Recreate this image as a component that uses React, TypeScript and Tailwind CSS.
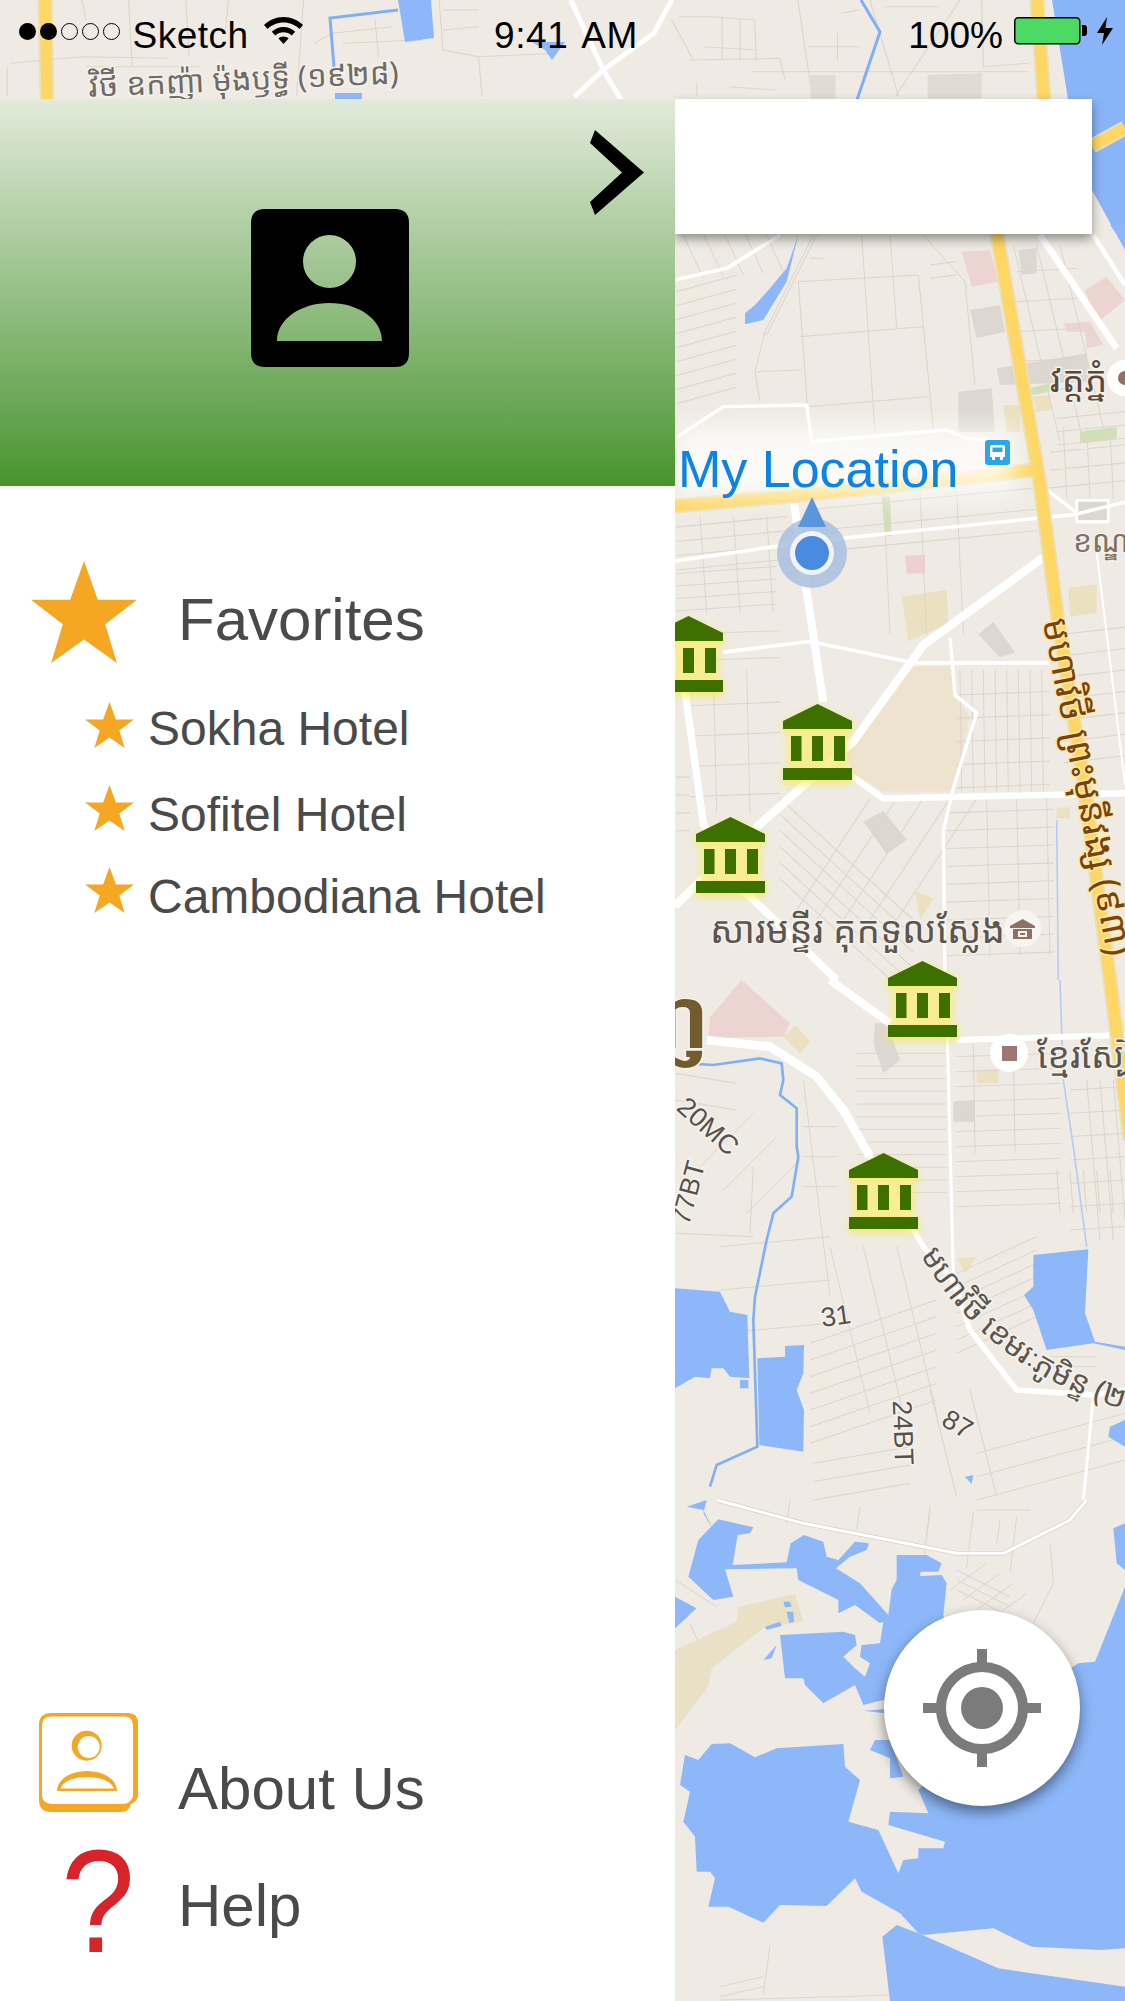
import type { ReactNode } from 'react';

const FONT = "font-['Liberation_Sans',Arial,sans-serif]";
const KHMER = "'Noto Sans Khmer','Noto Sans','DejaVu Sans',sans-serif";

// parallel street lines, returns one path string
function hatch(x1: number, y1: number, x2: number, y2: number, dx: number, dy: number, n: number) {
  let d = '';
  for (let i = 0; i < n; i++) {
    d += `M${x1 + i * dx} ${y1 + i * dy}L${x2 + i * dx} ${y2 + i * dy}`;
  }
  return d;
}

function Crop({ x, y, sx = 3, sy = 3, children }: { x: number; y: number; sx?: number; sy?: number; children: ReactNode }) {
  return <g transform={`translate(${x} ${y}) scale(${1 / sx} ${1 / sy})`}>{children}</g>;
}

const MINOR_A = [
  hatch(20, 300, 350, 270, 0, 40, 4),
  hatch(20, 430, 320, 410, 0, 35, 4),
  hatch(90, 270, 110, 540, 100, 0, 3),
  hatch(870, 700, 875, 1040, 35, 0, 8),
  hatch(860, 770, 1140, 760, 0, 65, 5),
  hatch(330, 1060, 730, 1400, 0, 45, 6),
  hatch(360, 1400, 600, 1060, 80, 0, 5),
  hatch(830, 1100, 1150, 1090, 0, 50, 9),
  hatch(950, 1060, 960, 1500, 90, 0, 3),
  hatch(1180, 600, 1365, 580, 0, 60, 7),
  hatch(430, 250, 1100, 190, 0, 60, 3),
  hatch(640, 200, 660, 600, 110, 0, 3),
  hatch(20, 600, 330, 590, 0, 75, 2),
  hatch(60, 800, 330, 790, 0, 85, 4),
  hatch(130, 700, 140, 1100, 100, 0, 2),
  hatch(20, 1000, 60, 1000, 0, 50, 4),
  hatch(1140, 90, 1365, 70, 0, 50, 3),
  hatch(1180, 20, 1190, 220, 70, 0, 3),
].join('');

const MINOR_B = [
  hatch(560, 220, 830, 220, 0, 38, 12),
  hatch(860, 230, 1170, 220, 0, 45, 11),
  hatch(910, 190, 915, 520, 120, 0, 2),
  hatch(1160, 570, 1170, 700, 40, 0, 5),
  hatch(1200, 330, 1365, 320, 0, 70, 7),
  hatch(1250, 300, 1290, 780, 40, 0, 3),
  hatch(420, 1090, 800, 960, 0, 50, 7),
  hatch(860, 880, 1100, 770, 0, 40, 7),
  hatch(480, 800, 600, 1300, 100, 0, 3),
  hatch(150, 800, 480, 770, 0, 130, 3),
  hatch(20, 760, 250, 770, 0, 0, 1),
  hatch(15, 280, 200, 310, 0, 80, 2),
  hatch(400, 440, 500, 440, 0, 90, 3),
  hatch(400, 300, 480, 950, 0, 0, 1),
  hatch(250, 560, 240, 760, 0, 0, 1),
  hatch(90, 560, 250, 400, 70, 70, 3),
  hatch(430, 1450, 720, 1400, 0, 55, 3),
  hatch(920, 1420, 1365, 1300, 0, 70, 3),
  hatch(780, 1230, 860, 1550, 120, 0, 2),
  hatch(1140, 1130, 1280, 1130, 0, 30, 2),
].join('');

const MINOR_C = [
  hatch(360, 0, 350, 70, 210, 20, 4),
  hatch(780, 20, 760, 190, 130, 15, 3),
  hatch(860, 210, 1020, 290, 0, 30, 3),
  hatch(840, 270, 950, 190, 40, 30, 4),
  hatch(1140, 130, 1150, 250, 0, 0, 1),
  hatch(1150, 250, 1090, 370, 0, 0, 1),
  hatch(920, 30, 1080, 30, 0, 0, 1),
  hatch(15, 240, 140, 320, 0, 0, 1),
  hatch(60, 370, 110, 480, 0, 0, 1),
  hatch(150, 1500, 850, 1480, 0, 0, 1),
  hatch(300, 1340, 280, 1480, 0, 0, 1),
  hatch(150, 1460, 280, 1430, 0, 30, 2),
].join('');

const MINOR_D = [
  hatch(385, 170, 745, 150, 0, 0, 1),
  hatch(745, 150, 790, 610, 0, 0, 1),
  hatch(385, 170, 420, 650, 0, 0, 1),
  hatch(575, 30, 615, 620, 0, 0, 1),
  hatch(390, 335, 760, 305, 0, 0, 1),
  hatch(420, 545, 775, 515, 0, 0, 1),
  hatch(260, 440, 395, 435, 0, 0, 1),
  hatch(660, 30, 680, 310, 0, 0, 1),
  hatch(20, 200, 200, 150, 0, 42, 9),
  hatch(40, 30, 100, 160, 60, -5, 5),
  hatch(430, 30, 280, 330, 10, 0, 2),
  hatch(285, 320, 255, 440, 0, 0, 1),
  hatch(255, 440, 270, 530, 0, 0, 1),
  hatch(420, 100, 460, 100, 0, 0, 1),
  hatch(760, 30, 885, 170, 0, 0, 1),
  hatch(885, 170, 915, 480, 0, 0, 1),
  hatch(780, 120, 860, 110, 0, 40, 2),
  hatch(1030, 60, 1170, 650, 70, 0, 3),
  hatch(1040, 140, 1220, 130, 0, 90, 5),
  hatch(1160, 580, 1365, 560, 0, 40, 3),
].join('');

const TOP_LEFT = 'M230 0L240 60M360 0L370 200M520 0L530 170M640 0L630 100M30 190L230 170L470 175M240 200L560 200M880 130L930 100L1100 80M960 130L1180 120M1050 60L1060 170M1240 30L1340 30M1240 90L1340 80M1230 0L1240 150L1340 170L1350 290M850 0L830 290M20 200L20 290M1340 170L1560 160';
const TOP_RIGHT = 'M330 50L420 50L540 60M450 50L450 180M500 60L500 180M540 60L545 185M400 140L540 150M360 180L610 175L625 240M660 0L700 290M690 140L830 140M770 100L770 180M530 215L1300 215M1110 0L930 290M1170 0L1175 200L1300 190M470 260L600 270M310 60L370 180M860 0L940 290M900 20L1050 20M780 40L830 30M380 250L380 290';

const LABEL = '[paint-order:stroke]';

function MapBase() {
  return (
    <svg className="absolute inset-0" width={1125} height={2001} viewBox="0 0 1125 2001" fill="none">
      <rect width={1125} height={2001} fill="#efebe4" />

      {/* top right river */}
      <path d="M1052 0H1125V250L1092 190L1068 99Z" fill="#8ab4f8" />

      {/* land use patches */}
      <Crop x={670} y={225}>
        <path d="M875 80L960 75L985 170L905 185ZM1245 195L1310 155L1365 225L1280 295ZM1180 295L1260 290L1300 360L1250 370L1245 320L1190 320Z" fill="#ecd5d1" />
        <path d="M900 255L990 240L1005 320L920 340ZM980 430L1250 385L1260 470L990 480ZM865 500L965 490L975 620L865 620ZM1045 75L1100 70L1100 145L1055 150Z" fill="#dcd8d1" />
        <path d="M1230 620L1340 605L1340 640L1230 655ZM1080 490L1140 475L1140 500L1085 510Z" fill="#cfe0b4" />
        <path d="M1090 515L1140 510L1145 555L1100 560ZM1000 540L1050 540L1050 620L1010 620Z" fill="#ebe0bf" />
      </Crop>
      <Crop x={670} y={420} sy={2.8}>
        <path d="M530 940L730 690L850 690L850 770L900 830L850 1040L640 1040L550 990Z" fill="#eee3cf" />
        <path d="M695 495L830 475L835 570L715 620ZM1195 470L1280 460L1280 540L1200 550ZM1160 1085L1200 1085L1200 1115L1160 1115ZM735 1320L790 1340L750 1400Z" fill="#ebe0bf" />
        <path d="M705 380L765 378L765 430L710 430Z" fill="#efcfd0" />
        <path d="M635 215L660 215L665 325L645 325Z" fill="#cfe0b4" />
        <path d="M1225 225L1310 225L1310 280L1225 280ZM580 1125L640 1095L710 1175L650 1215ZM925 600L970 565L1035 650L990 665Z" fill="#dcd8d1" />
      </Crop>
      <Crop x={670} y={980}>
        <path d="M120 110L215 0L360 130L340 170L115 175Z" fill="#ecd5d1" />
        <path d="M340 170L375 135L420 185L390 220ZM920 270L985 265L985 310L920 310ZM860 835L920 830L885 880Z" fill="#ebe0bf" />
        <path d="M615 130L650 130L690 240L640 280L610 190ZM850 365L915 360L915 425L850 425Z" fill="#dcd8d1" />
      </Crop>

      {/* minor streets */}
      <g stroke="#dad6cc" fill="none">
        <Crop x={670} y={420} sy={2.8}><path d={MINOR_A} strokeWidth={3} /></Crop>
        <Crop x={670} y={980}><path d={MINOR_B} strokeWidth={3} /></Crop>
        <Crop x={670} y={1500}><path d={MINOR_C} strokeWidth={3} /></Crop>
        <Crop x={670} y={225}><path d={MINOR_D} strokeWidth={3} /></Crop>
        <Crop x={0} y={0} sx={2.8}><path d={TOP_LEFT} strokeWidth={3} /></Crop>
        <Crop x={560} y={0} sx={2.775}>
          <path d={TOP_RIGHT} strokeWidth={3} />
          <path d="M695 225H765V295H695ZM1020 225L1170 220V295H1020Z" fill="#e0dcd4" stroke="none" />
        </Crop>
      </g>

      {/* water */}
      <g fill="#8db7f9">
        <path d="M398 0H431L434 38L405 42ZM532 42H565L552 60L545 50ZM335 93H362V99H335Z" />
        <Crop x={670} y={225}>
          <path d="M225 265L255 240L300 190L350 130L385 30L350 170L280 285L225 298ZM1320 0H1365V60Z" />
        </Crop>
        <Crop x={670} y={980}>
          <path d="M15 925L150 935L180 995L232 1005L238 1195L180 1190L160 1165L125 1165L120 1195L75 1190L15 1225Z" />
          <path d="M262 1135L345 1130L345 1098L402 1095L400 1180L380 1230L402 1290L400 1415L268 1395Z" />
          <path d="M1090 825L1255 808L1245 1000L1275 1085L1365 1100V1110L1270 1090L1130 1110L1090 990L1062 945L1090 920Z" />
          <path d="M1365 1320L1320 1340L1315 1370L1365 1400ZM885 1490L910 1485L905 1512ZM210 1200H235V1225H210Z" />
        </Crop>
        <Crop x={670} y={1500}>
          <path d="M145 58L250 82L240 100L203 105L188 195L350 187L362 130L402 105L460 125L470 170L505 180L555 125L597 130L590 150L540 170L498 205L570 250L655 345L665 268L680 240L680 165L770 165L815 190L805 215L752 215L750 228L815 225L830 250L820 345L900 700L1225 490L1275 485L1365 260V1345L1290 1350L1085 1340L970 1285L760 1305L745 1300L690 1240L575 1175L555 1135L470 1218L330 1215L280 1268L175 1220L115 1220L135 1135L120 1115L80 1115L75 1010L40 965L60 875L30 855L45 765L85 780L125 732L180 730L255 772L320 745L520 732L525 800L570 840L535 965L625 990L685 1120L700 1080L745 1075L745 1045L820 1045L825 1025L655 975L660 935L775 940L745 870L900 700L640 600L580 615L555 555L460 610L405 555L400 535L345 535L330 405L520 395L555 405L560 435L520 470L555 505L585 530L600 490L570 470L575 435L630 430L640 365L630 370L555 315L505 340L505 300L385 240L380 205L165 208L190 290L130 300L55 230L85 120Z" />
          <path d="M1330 85L1365 70V210L1340 190ZM15 290L80 325L15 385ZM600 750L615 720L660 720L700 830L660 835L660 775ZM637 1310L680 1275L745 1300L985 1405L1365 1460V1503H660ZM50 20L110 0L100 40L130 90L100 30Z" />
          <path d="M580 632L645 628V640Z" />
          <path d="M15 450L200 365L205 320L375 282L400 365L280 385L125 505L115 560L15 690Z" fill="#e9e0c5" />
          <path d="M285 380L330 365L335 378L290 390ZM340 305H360L365 320L345 322ZM350 335H370L372 365L358 368Z" />
          <path d="M280 480L320 435L305 475Z" />
        </Crop>
      </g>

      {/* streams */}
      <g stroke="#7fb0f5" fill="none">
        <path d="M861 0L880 32L857 100" strokeWidth={3} />
        <path d="M398 10L330 18L334 67" strokeWidth={3} />
        <Crop x={670} y={980}>
          <path d="M50 250L130 255L270 235L335 250L340 300L330 345L380 385L380 500L385 530L365 650L310 700L290 780L255 950L250 1020L262 1400L140 1455L120 1520" strokeWidth={8} />
          <path d="M1170 0L1180 300L1210 500L1250 800" strokeWidth={5} stroke="#b5cdf2" />
        </Crop>
        <Crop x={670} y={420} sy={2.8}>
          <path d="M1160 1120L1165 1568" strokeWidth={5} stroke="#b5cdf2" />
        </Crop>
      </g>

      {/* white roads */}
      <g stroke="#ffffff" fill="none" strokeLinejoin="round">
        <Crop x={670} y={225}>
          <path d="M15 165L170 130L330 30" strokeWidth={11} />
          <path d="M1110 30L1340 370" strokeWidth={20} />
          <path d="M1270 30L1365 180" strokeWidth={14} />
          <path d="M15 640L160 545L410 540L425 650L830 615L890 640L1000 650" strokeWidth={10} />
        </Crop>
        <Crop x={670} y={420} sy={2.8}>
          <path d="M370 220L410 480L460 790" strokeWidth={24} />
          <path d="M15 1360L260 1140L550 900L760 630L1120 385" strokeWidth={24} />
          <path d="M550 1000L640 1060L1365 1045" strokeWidth={18} />
          <path d="M45 760L100 1130L180 1280L500 1568" strokeWidth={22} />
          <path d="M15 395L420 340L1210 265L1365 230" strokeWidth={10} />
          <path d="M1110 180L1220 260" strokeWidth={10} />
          <path d="M160 650L420 620L730 680L1140 680" strokeWidth={10} />
          <path d="M840 610L855 770L920 820L850 1030L820 1150L825 1568" strokeWidth={10} />
          <path d="M1280 370L1365 1020" strokeWidth={6} />
          <path d="M1220 225H1315V285H1220Z" strokeWidth={8} />
        </Crop>
        <Crop x={670} y={980}>
          <path d="M480 0L660 130" strokeWidth={24} />
          <path d="M110 180L300 200L440 290L520 390L600 530" strokeWidth={26} />
          <path d="M600 530L760 800L850 900L900 1050L1040 1230L1270 1245L1365 1230" strokeWidth={16} />
          <path d="M832 170L850 890" strokeWidth={9} />
          <path d="M860 180L1365 165" strokeWidth={18} />
          <path d="M1270 1250L1240 1560" strokeWidth={8} />
        </Crop>
        <Crop x={670} y={1500}>
          <path d="M140 0L400 70L860 160L1000 160L1200 60L1250 0" strokeWidth={14} stroke="#d9d4ca" />
          <path d="M140 0L400 70L860 160L1000 160L1200 60L1250 0" strokeWidth={9} />
        </Crop>
        <Crop x={560} y={0} sx={2.775}>
          <path d="M30 0L120 210L170 300" strokeWidth={14} />
          <path d="M310 0L260 100L120 210L40 290" strokeWidth={14} />
        </Crop>
      </g>

      {/* yellow roads */}
      <g fill="none" strokeLinejoin="round">
        <g stroke="#ecdfb4" strokeWidth={15}>
          <path d="M45 0L47 99M1037 0L1044 99M1092 146L1125 128" />
          <path d="M997 234L1040 484L1057 613L1083 777L1110 980L1130 1140" />
          <path d="M675 506L803 495L960 479L1033 470" />
        </g>
        <g stroke="#fdd663" strokeWidth={11}>
          <path d="M45 0L47 99M1037 0L1044 99M1092 146L1125 128" />
          <path d="M997 234L1040 484L1057 613L1083 777L1110 980L1130 1140" />
          <path d="M675 506L803 495L960 479L1033 470" />
        </g>
      </g>

      {/* place labels */}
      <g fontFamily={KHMER}>
        <text x={89} y={97} fontSize={31} fill="#6f6b66" stroke="#f5f2ec" strokeWidth={3} className={LABEL} transform="rotate(-2.500 89 97)">វិថី ឧកញ៉ា ម៉ុងឫទ្ធី (១៩២៨)</text>
        <text x={1050} y={392} fontSize={36} fill="#5b4a3c" stroke="#f5f2ec" strokeWidth={3} className={LABEL}>វត្តភ្នំ</text>
        <text x={1073} y={552} fontSize={30} fill="#7e7263" stroke="#f5f2ec" strokeWidth={3} className={LABEL}>ខណ្ឌ</text>
        <text x={710} y={943} fontSize={37} fill="#5c5650" stroke="#f5f2ec" strokeWidth={3} className={LABEL}>សារមន្ទីរ គុកទួលស្លែង</text>
        <text x={1037} y={1068} fontSize={36} fill="#5c5650" stroke="#f5f2ec" strokeWidth={3} className={LABEL}>ខ្មែរស្ប៊ែរ</text>
        <text x={710} y={1048} fontSize={84} fontWeight={700} textAnchor="end" fill="#725c2e" stroke="#f5f2ec" strokeWidth={3} className={LABEL}>ភ្នំពេញ</text>
        <text transform="translate(1075 789) rotate(79)" fontSize={37} textAnchor="middle" fill="#79430f" stroke="#fde9a8" strokeWidth={3} className={LABEL}>មហាវិថី ព្រះមុនីវង្ស (៩៣)</text>
        <path id="khemarak" d="M920 1255Q975 1345 1060 1385T1140 1400" />
        <text fontSize={31} fill="#5c5650" stroke="#f5f2ec" strokeWidth={3} className={LABEL}>
          <textPath href="#khemarak">មហាវិថី ខេមរៈភូមិន្ទ (២</textPath>
        </text>
      </g>
      <g fontFamily="'Liberation Sans',Arial,sans-serif" fontSize={27} fill="#55524e" stroke="#f5f2ec" strokeWidth={3} className={LABEL} textAnchor="middle">
        <text transform="translate(702 1133) rotate(42)">20MC</text>
        <text transform="translate(697 1195) rotate(-75)">77BT</text>
        <text transform="translate(837 1325) rotate(-8)">31</text>
        <text transform="translate(894 1433) rotate(88)">24BT</text>
        <text transform="translate(953 1432) rotate(30)">87</text>
      </g>
    </svg>
  );
}

function Star({ className }: { className: string }) {
  return (
    <svg className={className} viewBox="0 0 100 100" preserveAspectRatio="none">
      <polygon points="50,0 63,38 100,38 70,62 81,100 50,77 19,100 30,62 0,38 37,38" fill="#f5a623" />
    </svg>
  );
}

// green museum pin with the yellow glow around it
function MuseumPin({ className }: { className: string }) {
  return (
    <svg className={`absolute drop-shadow-[0_3px_4px_#f8ea55] ${className}`} width={69} height={76} viewBox="0 0 69 76">
      <rect x={5} y={24} width={59} height={44} fill="#f8ee9a" opacity={0.55} />
      <path d="M34.5 0L69 17V25H0V17Z" fill="#3e7000" />
      <path d="M8 32H18.500V57H8ZM29 32H40V57H29ZM51 32H62V57H51ZM0 64H69V76H0Z" fill="#3e7000" />
    </svg>
  );
}

function LocationDot() {
  return (
    <svg className="absolute left-[777px] top-[497px]" width={70} height={92} viewBox="0 0 70 92">
      <circle cx={35} cy={56} r={35} fill="#a7c0e0" opacity={0.85} />
      <circle cx={35} cy={56} r={22} fill="#f1f3f5" />
      <circle cx={35} cy={56} r={17} fill="#4a8be2" />
      <path d="M35 0L49 30H21Z" fill="#5a96de" />
    </svg>
  );
}

function MapMarkers() {
  return (
    <>
      <div className="absolute left-[675px] top-[428px] h-[68px] w-[340px] bg-white/75 blur-md" />
      <p className={`absolute left-[678px] top-[443px] text-[52px] leading-none text-[#0a84e6] ${FONT}`}>My Location</p>
      <svg className="absolute left-[985px] top-[440px]" width={25} height={25} viewBox="0 0 25 25">
        <rect width={25} height={25} rx={3} fill="#29a7ea" />
        <path d="M7 5H18Q20 5 20 7V17H5V7Q5 5 7 5ZM7.500 7.500V12H17.500V7.500ZM7 17H10V20H7ZM15 17H18V20H15Z" fill="#fff" fillRule="evenodd" />
      </svg>
      <LocationDot />
      <MuseumPin className="left-[654px] top-[616px]" />
      <MuseumPin className="left-[783px] top-[704px]" />
      <MuseumPin className="left-[696px] top-[817px]" />
      <MuseumPin className="left-[888px] top-[961px]" />
      <MuseumPin className="left-[849px] top-[1153px]" />

      <div className="absolute left-[1004px] top-[910px] flex h-[37px] w-[37px] items-center justify-center rounded-full bg-[#f7f5f1]">
        <svg width={25} height={20} viewBox="0 0 25 20">
          <path d="M12.500 0L25 7V9H0V7ZM3 10H22V20H3ZM8 12V18H17V12Z" fill="#8f6f66" fillRule="evenodd" />
          <path d="M10 14H15V16H10Z" fill="#8f6f66" />
        </svg>
      </div>
      <div className="absolute left-[990px] top-[1034px] flex h-[38px] w-[38px] items-center justify-center rounded-full bg-white">
        <div className="h-[15px] w-[15px] bg-[#9d7872]" />
      </div>
      <div className="absolute left-[1107px] top-[360px] flex h-[36px] w-[36px] items-center justify-center rounded-full bg-white">
        <div className="h-[14px] w-[14px] rounded-full bg-[#8f6f66]" />
      </div>
    </>
  );
}

function StatusBar() {
  return (
    <div className={`relative grid h-[99px] grid-cols-[1fr_auto_1fr] pl-[19px] pr-[12px] pt-[15px] text-[37px] leading-[41px] text-black ${FONT}`}>
      <div className="flex items-start">
        <div className="mt-[8px] flex gap-[4.500px]">
          <span className="h-[16.500px] w-[16.500px] rounded-full bg-black" />
          <span className="h-[16.500px] w-[16.500px] rounded-full bg-black" />
          <span className="h-[16.500px] w-[16.500px] rounded-full border border-black" />
          <span className="h-[16.500px] w-[16.500px] rounded-full border border-black" />
          <span className="h-[16.500px] w-[16.500px] rounded-full border border-black" />
        </div>
        <span className="ml-[13px] tracking-[0.5px]">Sketch</span>
        <svg className="ml-[15px] mt-[2px]" width={39} height={27} viewBox="0 0 39 27">
          <path d="M19.500 0C27 0 34 3 39 8L35.500 12C31.500 8 25.500 5.500 19.500 5.500S7.500 8 3.500 12L0 8C5 3 12 0 19.500 0Z" fill="#000" />
          <path d="M19.500 10C24 10 28 11.700 31.200 14.700L27.700 18.500C25.500 16.500 22.500 15.300 19.500 15.300S13.500 16.500 11.300 18.500L7.800 14.700C11 11.700 15 10 19.500 10Z" fill="#000" />
          <path d="M19.500 19.500C21.500 19.500 23.200 20.200 24.500 21.400L19.500 27L14.500 21.400C15.800 20.200 17.500 19.500 19.500 19.500Z" fill="#000" />
        </svg>
      </div>
      <span className="tracking-[0.6px] [word-spacing:4px]">9:41 AM</span>
      <div className="flex items-start justify-end">
        <span>100%</span>
        <svg className="ml-[11px] mt-[2px]" width={74} height={28} viewBox="0 0 74 28">
          <rect x={0.750} y={0.750} width={65} height={26} rx={3.500} fill="#4cd964" stroke="#000" strokeWidth={1.500} />
          <path d="M68 8H70Q73 8 73 11V16Q73 19 70 19H68Z" fill="#000" />
        </svg>
        <svg className="ml-[9px] mt-[2px]" width={16} height={28} viewBox="0 0 16 28">
          <path d="M10 0L0 16H7L5 28L16 11H8.500Z" fill="#000" />
        </svg>
      </div>
    </div>
  );
}

function ContactIcon() {
  return (
    <svg width={158} height={158} viewBox="0 0 158 158">
      <path
        fillRule="evenodd"
        fill="#000"
        d="M14 0H144Q158 0 158 14V144Q158 158 144 158H14Q0 158 0 144V14Q0 0 14 0ZM78.500 26A26.500 26.500 0 1 0 78.500 79A26.500 26.500 0 1 0 78.500 26ZM26 132H131C131 110 107 94 78.500 94S26 110 26 132Z"
      />
    </svg>
  );
}

function AboutIcon() {
  return (
    <svg width={99} height={99} viewBox="0 0 99 99">
      <path
        fillRule="evenodd"
        fill="#f5a623"
        d="M12 0H89Q99 0 99 10V82Q99 88 92 91V87Q94 85 94 82V12Q94 4 86 3.500H12Q3 3.500 3 12V82Q3 90 12 91H84Q89 91 92 87V91Q90 99 82 99H12Q0 99 0 87V12Q0 0 12 0Z"
      />
      <path
        fillRule="evenodd"
        fill="#f5a623"
        d="M47.700 17.700A15 15 0 1 0 47.700 47.700A15 15 0 1 0 47.700 17.700ZM49.700 23A11 11 0 1 1 49.700 45A11 11 0 1 1 49.700 23ZM18 78H78C78 67 65 58 48 58S18 67 18 78ZM21.500 75.500C24 68 35 64 48 64S72 68 75 75.500Z"
      />
    </svg>
  );
}

const HOTELS = [
  { name: 'Sokha Hotel', rowClass: 'h-[83px]', textClass: 'mt-[3px]' },
  { name: 'Sofitel Hotel', rowClass: 'h-[82px]', textClass: 'mt-[6px]' },
  { name: 'Cambodiana Hotel', rowClass: 'h-[82px]', textClass: 'mt-[6px]' },
];

function Drawer() {
  return (
    <aside className={`flex w-[675px] flex-col bg-white text-[#4a4a4a] ${FONT}`}>
      <div className="relative flex h-[387px] items-center justify-center bg-gradient-to-b from-[#e2eadb] to-[#47952a] pb-[9px] pr-[15px]">
        <ContactIcon />
        <svg className="absolute right-[31px] top-[29px]" width={54} height={89} viewBox="0 0 54 89">
          <path d="M5 2L54 44.500L5 87L0 74L32 44.500L0 15Z" fill="#000" />
        </svg>
      </div>

      <div className="flex items-start pl-[31px] pt-[75px]">
        <Star className="h-[102px] w-[106px]" />
        <span className="ml-[41px] mt-[29px] text-[60px] leading-none">Favorites</span>
      </div>

      <ul className="pl-[85px] pt-[39px]">
        {HOTELS.map((hotel) => (
          <li key={hotel.name} className={`flex items-start ${hotel.rowClass}`}>
            <Star className="h-[46px] w-[49px]" />
            <span className={`ml-[14px] text-[48px] leading-none ${hotel.textClass}`}>{hotel.name}</span>
          </li>
        ))}
      </ul>

      <div className="mt-auto pb-[26px]">
        <div className="flex items-end pl-[39px]">
          <AboutIcon />
          <span className="-mb-[7px] ml-[40px] text-[60px] leading-none">About Us</span>
        </div>
        <div className="mt-[17px] flex items-start pl-[61px]">
          <span className="w-[117px] origin-left scale-x-[0.91] text-[146px] leading-none text-[#d8232a]">?</span>
          <span className="mt-[47px] text-[60px] leading-none">Help</span>
        </div>
      </div>
    </aside>
  );
}

function LocateButton() {
  return (
    <div className="mb-[195px] mr-[45px] mt-auto flex h-[196px] w-[196px] items-center justify-center self-end rounded-full bg-white shadow-[0_6px_14px_rgba(0,0,0,0.45)]">
      <svg width={118} height={118} viewBox="0 0 118 118">
        <circle cx={59} cy={59} r={41} fill="none" stroke="#7b7b7b" strokeWidth={10} />
        <circle cx={59} cy={59} r={21} fill="#7b7b7b" />
        <path d="M54 0H64V16H54ZM54 102H64V118H54ZM0 54H16V64H0ZM102 54H118V64H102Z" fill="#7b7b7b" />
      </svg>
    </div>
  );
}

export default function App() {
  return (
    <div className="relative flex h-[2001px] w-[1125px] flex-col overflow-hidden">
      <MapBase />
      <MapMarkers />
      <StatusBar />
      <div className="relative flex flex-1">
        <Drawer />
        <div className="flex flex-1 flex-col">
          <div className="h-[135px] w-[417px] bg-white shadow-[0_5px_10px_rgba(0,0,0,0.4)]" />
          <LocateButton />
        </div>
      </div>
    </div>
  );
}
